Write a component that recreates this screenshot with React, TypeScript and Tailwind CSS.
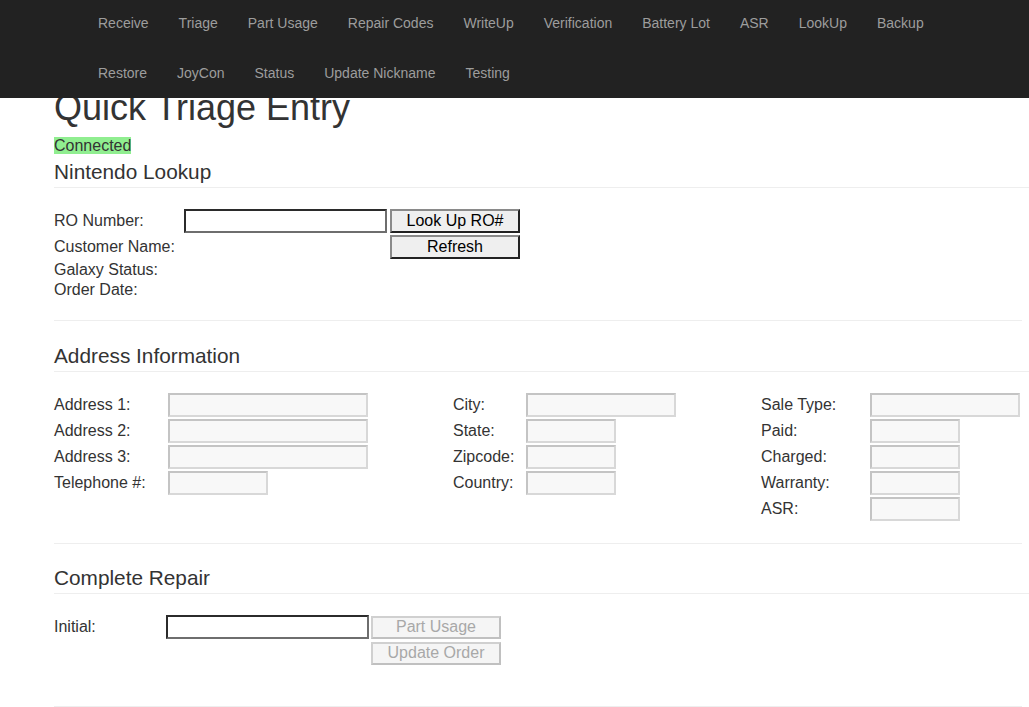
import React from "react";

const navRow1 = ["Receive", "Triage", "Part Usage", "Repair Codes", "WriteUp", "Verification", "Battery Lot", "ASR", "LookUp", "Backup"];
const navRow2 = ["Restore", "JoyCon", "Status", "Update Nickname", "Testing"];

function NavRow({ items }: { items: string[] }) {
  return (
    <ul className="flex h-[50px] pl-[83px]">
      {items.map((t) => (
        <li key={t} className="px-[15px] pt-[13px] leading-[20px] text-[14px] text-[#9d9d9d] whitespace-nowrap">
          {t}
        </li>
      ))}
    </ul>
  );
}

function SectionHeader({ children, mt }: { children: React.ReactNode; mt: string }) {
  return (
    <div className={`${mt} -mr-[7px] border-b border-[#eee] pb-[4px] text-[20.8px] leading-[22px]`}>{children}</div>
  );
}

function DisabledInput({ w }: { w: string }) {
  return (
    <div
      className={`${w} h-[24px] bg-[#f8f8f8] border-2 border-t-[#c4c4c4] border-l-[#c4c4c4] border-b-[#d8d8d8] border-r-[#d8d8d8]`}
    />
  );
}

function FieldRow({ label, lw, iw }: { label: string; lw: string; iw: string }) {
  return (
    <div className="flex h-[26px] items-center">
      <div className={`${lw} shrink-0`}>{label}</div>
      <DisabledInput w={iw} />
    </div>
  );
}

export default function App() {
  return (
    <div className="relative min-h-[707px] bg-white font-['Liberation_Sans',Arial,sans-serif] text-[16px] text-[#333] overflow-hidden">
      <nav className="absolute top-0 left-0 right-0 z-10 h-[98px] bg-[#222]">
        <NavRow items={navRow1} />
        <NavRow items={navRow2} />
      </nav>

      <main className="pl-[54px] pr-[7px] pt-[88px]">
        <h1 className="text-[36px] leading-[40px] font-normal">Quick Triage Entry</h1>
        <div className="mt-[8px] leading-[20px]">
          <span className="bg-[#90ee90]">Connected</span>
        </div>

        <SectionHeader mt="mt-[5px]">Nintendo Lookup</SectionHeader>

        <div className="mt-[20px]">
          <div className="flex h-[26px] items-center">
            <div className="w-[130px] shrink-0">RO Number:</div>
            <div className="w-[203px] h-[24px] bg-white border-2 border-t-[#2b2b2b] border-l-[#2b2b2b] border-b-[#6e6e6e] border-r-[#6e6e6e]" />
            <button className="ml-[3px] w-[130px] h-[24px] bg-[#efefef] text-black leading-none border-2 border-t-[#8a8a8a] border-l-[#8a8a8a] border-b-[#222] border-r-[#222]">
              Look Up RO#
            </button>
          </div>
          <div className="flex h-[26px] items-center">
            <div className="w-[130px] shrink-0">Customer Name:</div>
            <div className="w-[203px]" />
            <button className="ml-[3px] w-[130px] h-[24px] bg-[#efefef] text-black leading-none border-2 border-t-[#8a8a8a] border-l-[#8a8a8a] border-b-[#222] border-r-[#222]">
              Refresh
            </button>
          </div>
          <div className="h-[20px] leading-[20px]">Galaxy Status:</div>
          <div className="h-[20px] leading-[20px]">Order Date:</div>
        </div>

        <div className="mt-[20px] border-t border-[#eee]" />

        <SectionHeader mt="mt-[24px]">Address Information</SectionHeader>

        <div className="mt-[20px] flex">
          <div className="w-[399px] shrink-0">
            <FieldRow label="Address 1:" lw="w-[114px]" iw="w-[200px]" />
            <FieldRow label="Address 2:" lw="w-[114px]" iw="w-[200px]" />
            <FieldRow label="Address 3:" lw="w-[114px]" iw="w-[200px]" />
            <FieldRow label="Telephone #:" lw="w-[114px]" iw="w-[100px]" />
          </div>
          <div className="w-[308px] shrink-0">
            <FieldRow label="City:" lw="w-[73px]" iw="w-[150px]" />
            <FieldRow label="State:" lw="w-[73px]" iw="w-[90px]" />
            <FieldRow label="Zipcode:" lw="w-[73px]" iw="w-[90px]" />
            <FieldRow label="Country:" lw="w-[73px]" iw="w-[90px]" />
          </div>
          <div className="shrink-0">
            <FieldRow label="Sale Type:" lw="w-[109px]" iw="w-[150px]" />
            <FieldRow label="Paid:" lw="w-[109px]" iw="w-[90px]" />
            <FieldRow label="Charged:" lw="w-[109px]" iw="w-[90px]" />
            <FieldRow label="Warranty:" lw="w-[109px]" iw="w-[90px]" />
            <FieldRow label="ASR:" lw="w-[109px]" iw="w-[90px]" />
          </div>
        </div>

        <div className="mt-[21px] border-t border-[#eee]" />

        <SectionHeader mt="mt-[23px]">Complete Repair</SectionHeader>

        <div className="mt-[20px]">
          <div className="flex h-[26px] items-center">
            <div className="w-[112px] shrink-0">Initial:</div>
            <div className="w-[203px] h-[24px] bg-white border-2 border-t-[#2b2b2b] border-l-[#2b2b2b] border-b-[#6e6e6e] border-r-[#6e6e6e]" />
            <button
              disabled
              className="ml-[2px] w-[130px] h-[23px] bg-[#f5f5f5] text-[#a8a8a8] leading-none border-2 border-t-[#d0d0d0] border-l-[#d0d0d0] border-b-[#c0c0c0] border-r-[#c0c0c0]"
            >
              Part Usage
            </button>
          </div>
          <div className="flex h-[26px] items-center">
            <div className="w-[112px] shrink-0" />
            <div className="w-[203px]" />
            <button
              disabled
              className="ml-[2px] w-[130px] h-[23px] bg-[#f5f5f5] text-[#a8a8a8] leading-none border-2 border-t-[#d0d0d0] border-l-[#d0d0d0] border-b-[#c0c0c0] border-r-[#c0c0c0]"
            >
              Update Order
            </button>
          </div>
        </div>

        <div className="mt-[40px] border-t border-[#eee]" />
      </main>
    </div>
  );
}
